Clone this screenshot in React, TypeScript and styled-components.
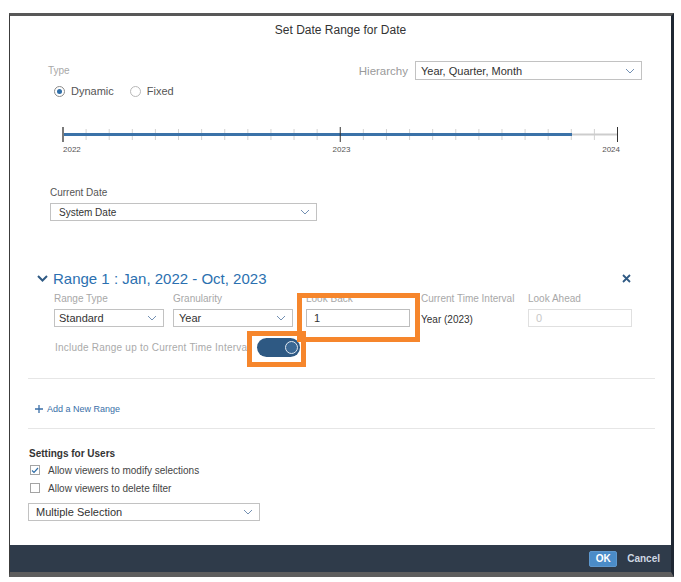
import React from "react";
import styled, { createGlobalStyle } from "styled-components";

const Global = createGlobalStyle`
  html, body { margin: 0; padding: 0; background: #fff; }
  body { font-family: "Liberation Sans", Arial, sans-serif; }
  * { box-sizing: border-box; }
`;

const Page = styled.div`
  width: 681px;
  height: 582px;
  overflow: hidden;
  padding: 13px 0 0 9px;
`;

const Dialog = styled.div`
  position: relative;
  width: 665px;
  height: 564px;
  background: #fff;
  border-top: 3px solid #585858;
  border-left: 1px solid #3c3c3c;
  border-right: 3px solid #1f2733;
  border-bottom: 5px solid #5e5e5e;
  display: flex;
  flex-direction: column;
`;

const Title = styled.div`
  height: 28px;
  line-height: 28px;
  text-align: center;
  font-size: 12px;
  color: #333;
`;

const TopRow = styled.div`
  display: flex;
  justify-content: space-between;
  align-items: flex-start;
  margin-top: 17px;
  padding: 0 29px 0 38px;
`;

const TypeGroup = styled.div`
  padding-top: 4px;
`;

const FieldLabel = styled.div<{ $dark?: boolean }>`
  font-size: 10px;
  line-height: 12px;
  color: ${(p) => (p.$dark ? "#555" : "#a8a8a8")};
  white-space: nowrap;
`;

const RadioRow = styled.div`
  display: flex;
  align-items: center;
  height: 14px;
  margin-top: 7px;
  padding-left: 6px;
`;

const RadioOption = styled.span`
  display: flex;
  align-items: center;
  gap: 6px;
  font-size: 11px;
  color: #555;
  margin-right: 16px;
`;

const RadioCircle = styled.span<{ $checked?: boolean }>`
  width: 11px;
  height: 11px;
  border-radius: 50%;
  border: 1px solid ${(p) => (p.$checked ? "#8a8a8a" : "#b8b8b8")};
  display: flex;
  align-items: center;
  justify-content: center;
  &::after {
    content: "";
    width: 5px;
    height: 5px;
    border-radius: 50%;
    background: ${(p) => (p.$checked ? "#2f6ea8" : "transparent")};
  }
`;

const HierarchyGroup = styled.div`
  display: flex;
  align-items: center;
  gap: 7px;
`;

const HierLabel = styled.span`
  font-size: 11.5px;
  color: #9a9a9a;
`;

const Select = styled.div<{ $w: number; $h: number; $fs: number; $pl: number }>`
  width: ${(p) => p.$w}px;
  height: ${(p) => p.$h}px;
  border: 1px solid #c2c2c2;
  background: #fff;
  display: flex;
  align-items: center;
  justify-content: space-between;
  padding: 0 6px 0 ${(p) => p.$pl}px;
  font-size: ${(p) => p.$fs}px;
  color: #333;
  white-space: nowrap;
`;

const Timeline = styled.div`
  margin: 27px 0 0 52px;
  width: 557px;
`;

const TimelineSvg = styled.svg`
  display: block;
`;

const YearRow = styled.div`
  display: flex;
  justify-content: space-between;
  width: 557px;
  margin-left: 1px;
  font-size: 8px;
  line-height: 10px;
  color: #555;
`;

const CurrentDate = styled.div`
  margin-top: 32px;
  padding-left: 40px;
`;

const Gap = styled.div<{ $h: number }>`
  height: ${(p) => p.$h}px;
`;

const RangeHeader = styled.div`
  margin-top: 48px;
  height: 18px;
  display: flex;
  align-items: center;
  justify-content: space-between;
  padding: 0 40px 0 27px;
`;

const RangeTitle = styled.div`
  display: flex;
  align-items: center;
  gap: 5px;
  font-size: 15px;
  color: #2b70b0;
  white-space: nowrap;
`;

const FieldGrid = styled.div`
  margin-top: 6px;
  padding-left: 44px;
  display: grid;
  grid-template-columns: 119px 133px 115px 107px 104px;
  row-gap: 4px;
`;

const TextBox = styled.div<{ $w: number; $disabled?: boolean }>`
  width: ${(p) => p.$w}px;
  height: 18px;
  border: 1px solid ${(p) => (p.$disabled ? "#e0e0e0" : "#bdbdbd")};
  display: flex;
  align-items: center;
  padding-left: 7px;
  font-size: 11px;
  color: ${(p) => (p.$disabled ? "#c8c8c8" : "#333")};
`;

const ValueText = styled.div`
  height: 18px;
  padding-top: 5px;
  font-size: 10px;
  line-height: 12px;
  color: #333;
  white-space: nowrap;
`;

const ToggleRow = styled.div`
  margin-top: 11px;
  height: 19px;
  display: flex;
  align-items: center;
  padding-left: 45px;
`;

const ToggleLabel = styled.div`
  width: 202px;
  overflow: hidden;
  white-space: nowrap;
  font-size: 10px;
  letter-spacing: 0.22px;
  color: #aaaaaa;
`;

const Toggle = styled.div`
  width: 43px;
  height: 19px;
  border-radius: 10px;
  background: #2e5983;
  display: flex;
  align-items: center;
  justify-content: flex-end;
  padding-right: 2px;
`;

const Knob = styled.div`
  width: 13px;
  height: 13px;
  border-radius: 50%;
  border: 1.5px solid #e3eaf2;
  background: #3b6894;
`;

const Divider = styled.div<{ $mt: number }>`
  margin: ${(p) => p.$mt}px 16px 0 18px;
  height: 1px;
  background: #e6e6e6;
`;

const AddRange = styled.div`
  margin-top: 24px;
  padding-left: 25px;
  height: 11px;
  display: flex;
  align-items: center;
  gap: 4px;
  font-size: 9px;
  color: #3a6fa8;
`;

const Settings = styled.div`
  margin-top: 19px;
  padding-left: 18px;
`;

const SettingsTitle = styled.div`
  font-size: 10px;
  line-height: 12px;
  font-weight: bold;
  color: #333;
  padding-left: 1px;
`;

const CheckRow = styled.div<{ $mt: number }>`
  margin-top: ${(p) => p.$mt}px;
  height: 14px;
  display: flex;
  align-items: center;
  gap: 8px;
  padding-left: 2px;
  font-size: 10px;
  color: #444;
`;

const CheckBox = styled.span`
  width: 10px;
  height: 10px;
  border: 1px solid #a4a4a4;
  display: flex;
  align-items: center;
  justify-content: center;
  background: #fff;
`;

const Footer = styled.div`
  margin-top: auto;
  height: 27px;
  background: #2f3b4a;
  display: flex;
  align-items: center;
  justify-content: flex-end;
  gap: 10px;
  padding-right: 11px;
`;

const OkButton = styled.div`
  width: 28px;
  height: 16px;
  background: #4b8cc8;
  border: 1px solid #5d98cf;
  border-radius: 2px;
  color: #fff;
  font-size: 10px;
  font-weight: bold;
  display: flex;
  align-items: center;
  justify-content: center;
`;

const CancelButton = styled.div`
  color: #cfd8e3;
  font-size: 10px;
  font-weight: bold;
`;

const Highlight = styled.div<{ $left: number; $top: number; $w: number; $h: number }>`
  position: absolute;
  left: ${(p) => p.$left}px;
  top: ${(p) => p.$top}px;
  width: ${(p) => p.$w}px;
  height: ${(p) => p.$h}px;
  border: 5px solid #f6862c;
  pointer-events: none;
`;

const Chevron = ({ color = "#7390b3" }: { color?: string }) => (
  <svg width="10" height="6" viewBox="0 0 10 6">
    <path d="M1 1 L5 5 L9 1" fill="none" stroke={color} strokeWidth="1" />
  </svg>
);

const DropDown = ({
  text,
  w,
  h = 18,
  fs = 11,
  pl = 5,
}: {
  text: string;
  w: number;
  h?: number;
  fs?: number;
  pl?: number;
}) => (
  <Select $w={w} $h={h} $fs={fs} $pl={pl}>
    <span>{text}</span>
    <Chevron />
  </Select>
);

const TimelineChart = () => {
  const start = 1;
  const end = 555.5;
  const step = (end - start) / 24;
  const minor = Array.from({ length: 23 }, (_, i) => i + 1).filter((k) => k !== 12);
  return (
    <TimelineSvg width="557" height="20" viewBox="0 0 557 20">
      {minor.map((k) => (
        <line
          key={k}
          x1={start + k * step}
          x2={start + k * step}
          y1={4}
          y2={15}
          stroke="#d2d2d2"
          strokeWidth="1"
        />
      ))}
      <rect x={510} y={8.5} width={end - 510} height={2} fill="#cdcdcd" />
      <rect x={start} y={8} width={509} height={3} fill="#3b72a8" />
      <line x1={start} x2={start} y1={2} y2={17} stroke="#7a7a7a" strokeWidth="2" />
      <line x1={start + 12 * step} x2={start + 12 * step} y1={2} y2={17} stroke="#333" strokeWidth="1" />
      <line x1={end} x2={end} y1={2} y2={17} stroke="#333" strokeWidth="1" />
    </TimelineSvg>
  );
};

export default function App() {
  return (
    <>
      <Global />
      <Page>
        <Dialog>
          <Title>Set Date Range for Date</Title>

          <TopRow>
            <TypeGroup>
              <FieldLabel>Type</FieldLabel>
              <RadioRow>
                <RadioOption>
                  <RadioCircle $checked />
                  Dynamic
                </RadioOption>
                <RadioOption>
                  <RadioCircle />
                  Fixed
                </RadioOption>
              </RadioRow>
            </TypeGroup>
            <HierarchyGroup>
              <HierLabel>Hierarchy</HierLabel>
              <DropDown text="Year, Quarter, Month" w={227} h={19} fs={11} pl={5} />
            </HierarchyGroup>
          </TopRow>

          <Timeline>
            <TimelineChart />
            <YearRow>
              <span>2022</span>
              <span>2023</span>
              <span>2024</span>
            </YearRow>
          </Timeline>

          <CurrentDate>
            <FieldLabel $dark>Current Date</FieldLabel>
            <Gap $h={4} />
            <DropDown text="System Date" w={267} fs={10} pl={8} />
          </CurrentDate>

          <RangeHeader>
            <RangeTitle>
              <svg width="11" height="7" viewBox="0 0 11 7">
                <path d="M1 1 L5.5 5.5 L10 1" fill="none" stroke="#2f5a84" strokeWidth="2" />
              </svg>
              Range 1 : Jan, 2022 - Oct, 2023
            </RangeTitle>
            <svg width="9" height="9" viewBox="0 0 9 9">
              <path d="M1 1 L8 8 M8 1 L1 8" stroke="#2f5a84" strokeWidth="1.8" />
            </svg>
          </RangeHeader>

          <FieldGrid>
            <FieldLabel>Range Type</FieldLabel>
            <FieldLabel>Granularity</FieldLabel>
            <FieldLabel>Look Back</FieldLabel>
            <FieldLabel>Current Time Interval</FieldLabel>
            <FieldLabel>Look Ahead</FieldLabel>
            <DropDown text="Standard" w={110} pl={4} />
            <DropDown text="Year" w={120} pl={5} />
            <TextBox $w={104}>1</TextBox>
            <ValueText>Year (2023)</ValueText>
            <TextBox $w={104} $disabled>
              0
            </TextBox>
          </FieldGrid>

          <ToggleRow>
            <ToggleLabel>Include Range up to Current Time Interval</ToggleLabel>
            <Toggle>
              <Knob />
            </Toggle>
          </ToggleRow>

          <Divider $mt={21} />

          <AddRange>
            <svg width="8" height="8" viewBox="0 0 8 8">
              <path d="M4 0 V8 M0 4 H8" stroke="#3a6fa8" strokeWidth="1.3" />
            </svg>
            Add a New Range
          </AddRange>

          <Divider $mt={14} />

          <Settings>
            <SettingsTitle>Settings for Users</SettingsTitle>
            <CheckRow $mt={3}>
              <CheckBox>
                <svg width="8" height="7" viewBox="0 0 8 7">
                  <path d="M1 3.5 L3 5.5 L7 1" fill="none" stroke="#2f6ea8" strokeWidth="1.2" />
                </svg>
              </CheckBox>
              Allow viewers to modify selections
            </CheckRow>
            <CheckRow $mt={4}>
              <CheckBox />
              Allow viewers to delete filter
            </CheckRow>
            <Gap $h={8} />
            <DropDown text="Multiple Selection" w={232} fs={11} pl={7} />
          </Settings>

          <Footer>
            <OkButton>OK</OkButton>
            <CancelButton>Cancel</CancelButton>
          </Footer>

          <Highlight $left={287} $top={277} $w={123} $h={49} />
          <Highlight $left={237} $top={315} $w={59} $h={36} />
        </Dialog>
      </Page>
    </>
  );
}
